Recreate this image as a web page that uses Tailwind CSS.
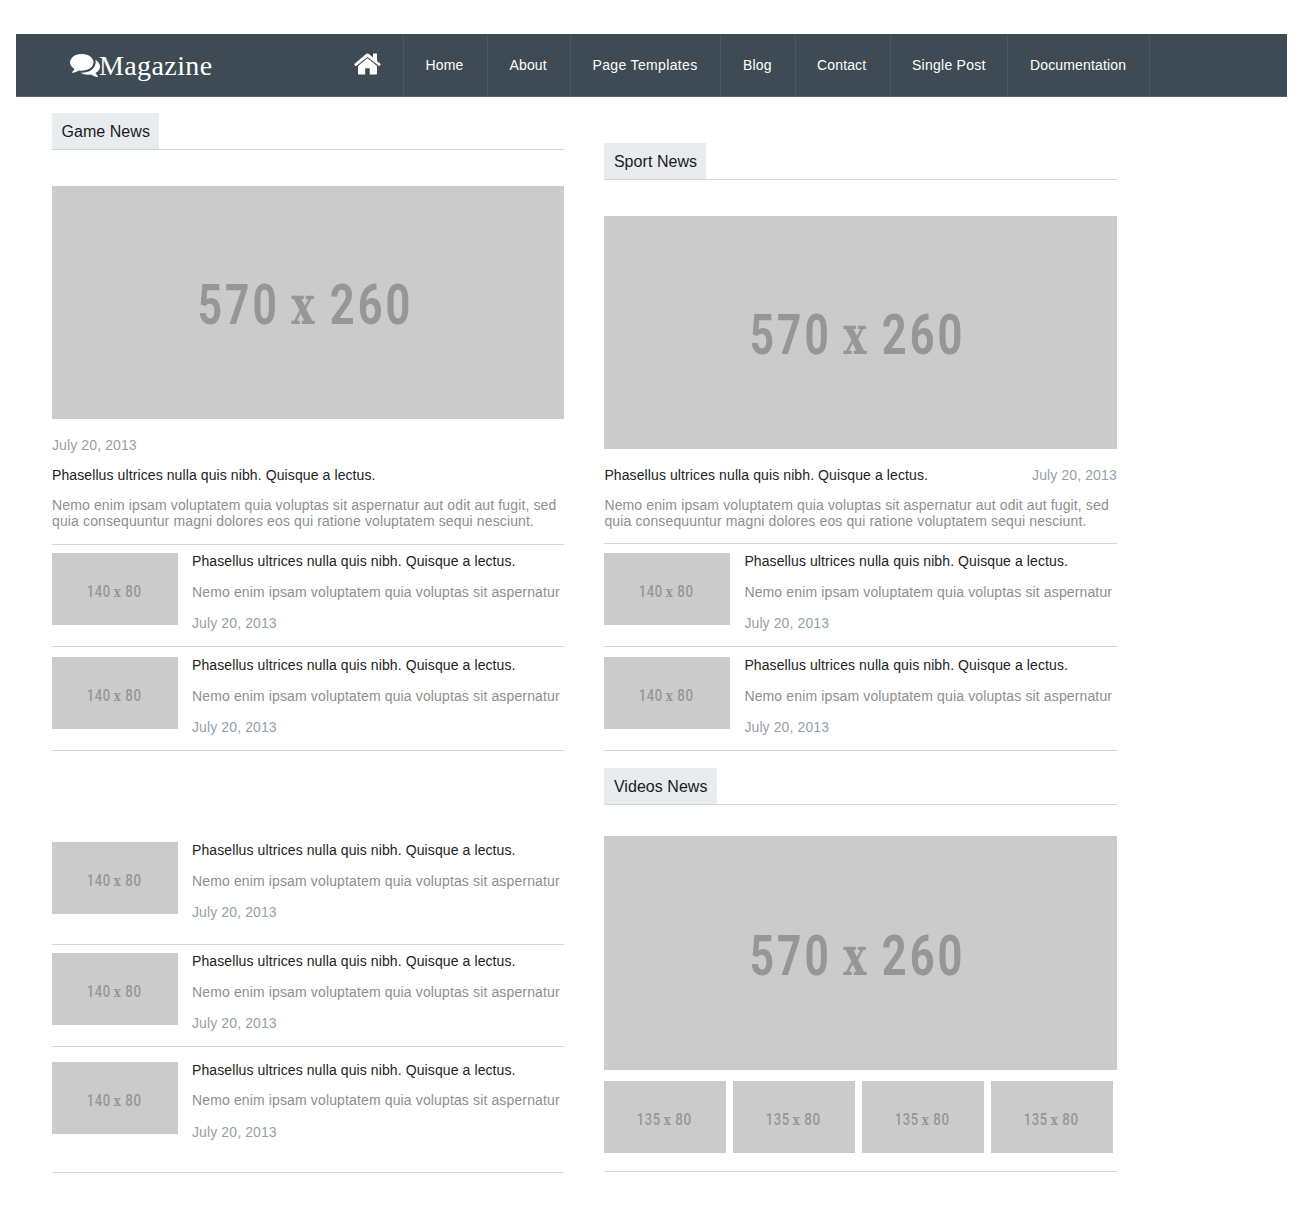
<!DOCTYPE html>
<html lang="en">
<head>
<meta charset="utf-8">
<title>Magazine</title>
<script src="https://cdn.jsdelivr.net/npm/@tailwindcss/browser@4"></script>
</head>
<body class="bg-white">
<div id="page" class="h-[1208px] overflow-hidden pt-[34px] pl-4 font-['Liberation_Sans',Arial,sans-serif] text-[14px] leading-4 text-[#8e8e8e]">
  <header class="flex h-[63px] w-[1271px] border-b border-[#57636c] bg-[#3e4b54] text-white">
    <a class="flex w-[316px] pl-[54px] pt-[13px]">
      <svg class="mt-[7px] h-[23px] w-[30px] shrink-0" viewBox="0 0 1792 1408" preserveAspectRatio="none" fill="currentColor">
        <path d="M1408 512q0 139-94 257t-256.500 186.500T704 1024q-86 0-176-16-124 88-278 128-36 9-86 16h-3q-11 0-20.500-8t-11.500-21q-1-3-1-6.500t.5-6.500 2-6l2.500-5 3.500-5.500 4-5 4.500-5 4-4.500q5-6 23-25t26-29.500 22.500-29 25-38.500 20.500-44Q142 846 71 740T0 512q0-139 94-257T350.500 68.500 704 0t353.500 68.500T1314 255t94 257zm384 256q0 120-71 224.500T1526 1166q10 24 20.500 44t25 38.500 22.500 29 26 29.500 23 25q1 1 4 4.500t4.500 5 4 5 3.500 5.500l2.500 5 2 6 .5 6.500-1 6.500q-3 14-13 22t-22 7q-50-7-86-16-154-40-278-128-90 16-176 16-271 0-472-132 58 4 88 4 161 0 309-45t264-129q125-92 192-212t67-254q0-77-23-152 129 71 204 178t75 230z"/>
      </svg>
      <span class="mt-[4px] -ml-px font-['Liberation_Serif',serif] text-[28px] leading-[30px] tracking-[0.4px]">Magazine</span>
    </a>
    <nav class="flex text-[14px] tracking-[0.15px]">
      <a class="w-[72px] border-r border-[#4b5861] pt-[19px] pl-[22px]">
        <svg class="h-[22px] w-[27px]" viewBox="0 0 27 22" fill="currentColor">
          <path d="M13.500 5.200 4 13v7.500c0 .6.400 1 1 1h6.200v-6.300h4.500v6.300H22c.6 0 1-.4 1-1V13z"/>
          <path d="M26.600 10.900 23 7.900V1c0-.3-.2-.5-.5-.5h-3c-.3 0-.5.2-.5.5v3.500l-4-3.600c-.9-.7-2.100-.7-3 0L.4 10.900c-.2.200-.2.500-.1.700l1.100 1.300c.2.200.5.200.7.100L13.500 3.900 25 13c.2.100.5.100.7-.1l1-1.300c.2-.2.1-.5-.1-.7z"/>
        </svg>
      </a>
      <a class="w-[84px] border-r border-[#4b5861] pt-[23px] pl-[21.500px]">Home</a>
      <a class="w-[83px] border-r border-[#4b5861] pt-[23px] pl-[21.500px]">About</a>
      <a class="w-[150px] border-r border-[#4b5861] pt-[23px] pl-[21.500px] whitespace-nowrap tracking-[0.35px]">Page Templates</a>
      <a class="w-[75px] border-r border-[#4b5861] pt-[23px] pl-[22px]">Blog</a>
      <a class="w-[95px] border-r border-[#4b5861] pt-[23px] pl-[21px]">Contact</a>
      <a class="w-[117px] border-r border-[#4b5861] pt-[23px] pl-[21px] whitespace-nowrap tracking-[0.25px]">Single Post</a>
      <a class="w-[142px] border-r border-[#4b5861] pt-[23px] pl-[22px]">Documentation</a>
    </nav>
  </header>

  <main class="flex gap-10 pl-9">
    <section class="w-[512.4px] pt-4">
      <h2 class="flex h-[37px] border-b border-[#d5d5d5]"><span class="w-[107px] bg-[#e8ecee] pt-[10px] pl-[9.5px] text-base leading-[18px] tracking-[0.05px] text-[#1a1a1a]">Game News</span></h2>
      <div data-big class="mt-9 h-[233px] bg-[#cbcbcb]"></div>
      <p class="mt-[18px] tracking-[0.11px] text-[#96a0aa]">July 20, 2013</p>
      <h3 class="mt-[14px] tracking-[0.1px] text-[#222]">Phasellus ultrices nulla quis nibh. Quisque a lectus.</h3>
      <p class="mt-[14px] h-[48px] whitespace-nowrap border-b border-[#d5d5d5] tracking-[0.13px]">Nemo enim ipsam voluptatem quia voluptas sit aspernatur aut odit aut fugit, sed<br>quia consequuntur magni dolores eos qui ratione voluptatem sequi nesciunt.</p>
      <article data-row class="flex h-[102px] gap-[14px] border-b border-[#d5d5d5] pt-2"></article>
      <article data-row class="flex h-[104px] gap-[14px] border-b border-[#d5d5d5] pt-[10px]"></article>
      <article data-row class="flex h-[194px] gap-[14px] border-b border-[#d5d5d5] pt-[91px]"></article>
      <article data-row class="flex h-[102px] gap-[14px] border-b border-[#d5d5d5] pt-2"></article>
      <article data-row class="flex h-[126px] gap-[14px] border-b border-[#d5d5d5] pt-[15px] [&_p]:first-of-type:-mt-px [&_p]:last-of-type:mt-px"></article>
    </section>

    <section class="w-[512.4px] pt-[46px]">
      <h2 class="flex h-[37px] border-b border-[#d5d5d5]"><span class="w-[102px] bg-[#e8ecee] pt-[10px] pl-[9.5px] text-base leading-[18px] tracking-[0.05px] text-[#1a1a1a]">Sport News</span></h2>
      <div data-big class="mt-9 h-[233px] bg-[#cbcbcb]"></div>
      <div class="mt-[18px] flex justify-between"><h3 class="tracking-[0.1px] text-[#222]">Phasellus ultrices nulla quis nibh. Quisque a lectus.</h3><p class="tracking-[0.11px] text-[#96a0aa]">July 20, 2013</p></div>
      <p class="mt-[14px] h-[47px] whitespace-nowrap border-b border-[#d5d5d5] tracking-[0.13px]">Nemo enim ipsam voluptatem quia voluptas sit aspernatur aut odit aut fugit, sed<br>quia consequuntur magni dolores eos qui ratione voluptatem sequi nesciunt.</p>
      <article data-row class="flex h-[103px] gap-[14px] border-b border-[#d5d5d5] pt-[9px]"></article>
      <article data-row class="flex h-[104px] gap-[14px] border-b border-[#d5d5d5] pt-[10px]"></article>
      <h2 class="mt-[17px] flex h-[37px] border-b border-[#d5d5d5]"><span class="w-[113px] bg-[#e8ecee] pt-[10px] pl-[9.5px] text-base leading-[18px] tracking-[0.05px] text-[#1a1a1a]">Videos News</span></h2>
      <div data-big class="mt-[31px] h-[234px] bg-[#cbcbcb]"></div>
      <div class="mt-[11px] flex h-[91px] gap-[7px] border-b border-[#d5d5d5]">
        <div data-thumb class="h-[72px] w-[122px] bg-[#cbcbcb]"></div>
        <div data-thumb class="h-[72px] w-[122px] bg-[#cbcbcb]"></div>
        <div data-thumb class="h-[72px] w-[122px] bg-[#cbcbcb]"></div>
        <div data-thumb class="h-[72px] w-[122px] bg-[#cbcbcb]"></div>
      </div>
    </section>
  </main>
</div>
<script>
  // Placeholder captions: each run is condensed horizontally by its own factor
  const run = (x, y, sx, text, extra) => `<text transform="translate(${x} ${y}) scale(${sx} 1)" ${extra}>${text}</text>`;
  const small = (num, w) => `<svg class="block h-full w-full fill-[#969696] font-['Roboto',sans-serif] font-medium" viewBox="0 0 ${w} 72" font-size="16.5">
    ${run(w / 2 - 28.3, 43.5, 0.787, num, 'letter-spacing="0.8"')}
    ${run(w / 2 - 1.3, 43.5, 0.775, 'x', 'font-family="DejaVu Serif" font-weight="700" font-size="15"')}
    ${run(w / 2 + 10.2, 43.5, 0.81, '80', 'letter-spacing="0.8"')}</svg>`;
  document.querySelectorAll('[data-big]').forEach(el => {
    el.innerHTML = `<svg class="block h-full w-full fill-[#969696] font-['Roboto',sans-serif] font-bold" viewBox="0 0 512.4 233" preserveAspectRatio="none" font-size="56">
      ${run(145.7, 138, 0.757, '570', 'letter-spacing="4"')}
      ${run(239.2, 138, 0.718, 'x', 'font-family="DejaVu Serif" font-size="54"')}
      ${run(277.7, 138, 0.774, '260', 'letter-spacing="4"')}</svg>`;
  });
  document.querySelectorAll('[data-thumb]').forEach(el => { el.innerHTML = small('135', 122); });
  document.querySelectorAll('[data-row]').forEach(el => {
    el.innerHTML = `<div class="h-[72px] w-[126px] shrink-0 bg-[#cbcbcb]">${small('140', 126)}</div>
      <div class="flex flex-col gap-[15px] whitespace-nowrap">
        <h3 class="tracking-[0.1px] text-[#222]">Phasellus ultrices nulla quis nibh. Quisque a lectus.</h3>
        <p class="tracking-[0.135px]">Nemo enim ipsam voluptatem quia voluptas sit aspernatur</p>
        <p class="tracking-[0.11px] text-[#96a0aa]">July 20, 2013</p>
      </div>`;
  });
</script>
</body>
</html>
